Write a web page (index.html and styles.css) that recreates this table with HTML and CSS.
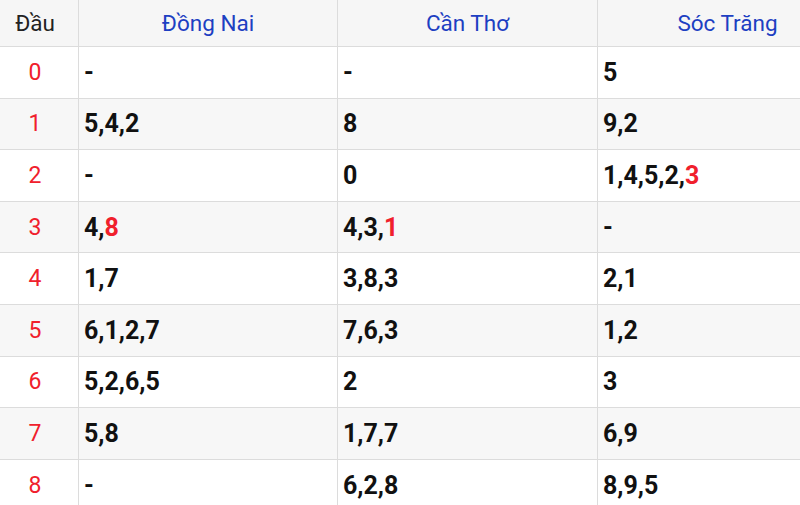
FILE: index.html
```html
<!DOCTYPE html>
<html lang="vi">
<head>
<meta charset="utf-8">
<link rel="stylesheet" href="styles.css">
</head>
<body>
<div class="wrap">
<table class="loto">
  <thead>
    <tr><th class="dau">Đầu</th><th class="prov p1">Đồng Nai</th><th class="prov">Cần Thơ</th><th class="prov">Sóc Trăng</th></tr>
  </thead>
  <tbody>
    <tr><td class="head">0</td><td>-</td><td>-</td><td>5</td></tr>
    <tr><td class="head">1</td><td>5,4,2</td><td>8</td><td>9,2</td></tr>
    <tr><td class="head">2</td><td>-</td><td>0</td><td>1,4,5,2,<span class="hl">3</span></td></tr>
    <tr><td class="head">3</td><td>4,<span class="hl">8</span></td><td>4,3,<span class="hl">1</span></td><td>-</td></tr>
    <tr><td class="head">4</td><td>1,7</td><td>3,8,3</td><td>2,1</td></tr>
    <tr><td class="head">5</td><td>6,1,2,7</td><td>7,6,3</td><td>1,2</td></tr>
    <tr><td class="head">6</td><td>5,2,6,5</td><td>2</td><td>3</td></tr>
    <tr><td class="head">7</td><td>5,8</td><td>1,7,7</td><td>6,9</td></tr>
    <tr><td class="head">8</td><td>-</td><td>6,2,8</td><td>8,9,5</td></tr>
  </tbody>
</table>
</div>
</body>
</html>
```
FILE: styles.css
```css
html, body {
  margin: 0;
  padding: 0;
  background: #ffffff;
  overflow: hidden;
}
.wrap {
  width: 800px;
  height: 505px;
  overflow: hidden;
}
.loto {
  margin: -1px 0 0 -9px;
  border-collapse: collapse;
  table-layout: fixed;
  width: 866px;
  font-family: Roboto, "Liberation Sans", sans-serif;
  font-size: 23px;
  color: #111111;
}
.loto th, .loto td {
  border: 1px solid #dcdcdc;
  padding: 0 5px;
  box-sizing: border-box;
  vertical-align: middle;
}
.loto th {
  height: 47px;
  background: #f6f6f6;
  font-weight: 400;
  font-size: 22.5px;
  text-align: center;
}
.loto th.dau { width: 87px; color: #222222; }
.loto th.prov { width: 260px; color: #1d3fc2; }
.loto th.prov.p1 { width: 259px; }
.loto td {
  height: 51.6px;
  font-weight: 700;
  font-size: 25px;
  text-align: left;
}
.loto td.head {
  font-weight: 400;
  font-size: 23px;
  color: #f0202c;
  text-align: center;
}
.loto tbody tr:nth-child(even) td { background: #f7f7f7; }
.loto .hl { color: #f0202c; }
```
